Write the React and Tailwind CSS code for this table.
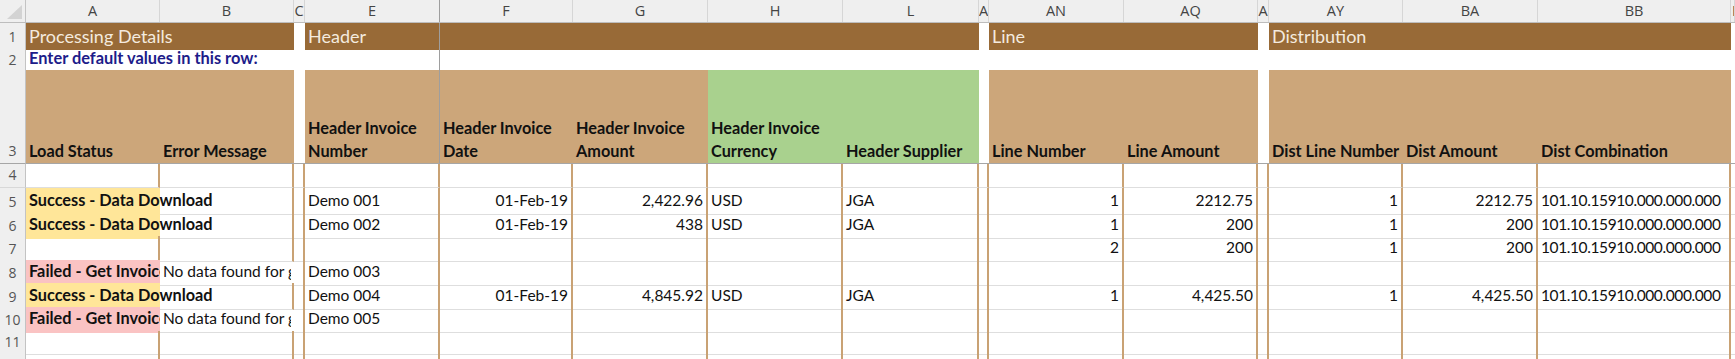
import React from "react";

// column template shared by every row of the sheet
const COLS =
  "grid grid-cols-[26px_134px_134px_11px_135px_133px_135px_135px_136px_10px_135px_134px_11px_134px_135px_193px_1fr]";

const LETTERS = ["A", "B", "C", "E", "F", "G", "H", "L", "A", "AN", "AQ", "A", "AY", "BA", "BB", "B"];

const DIST = "101.10.15910.000.000.000";

const rows = [
  { n: 4, h: "h-[24px]" },
  { n: 5, h: "h-[24px]", status: "ok", e: "Demo 001", f: "01-Feb-19", g: "2,422.96", cur: "USD", sup: "JGA", an: "1", aq: "2212.75", ay: "1", ba: "2212.75", bb: DIST },
  { n: 6, h: "h-[24px]", status: "ok", e: "Demo 002", f: "01-Feb-19", g: "438", cur: "USD", sup: "JGA", an: "1", aq: "200", ay: "1", ba: "200", bb: DIST },
  { n: 7, h: "h-[24px]", an: "2", aq: "200", ay: "1", ba: "200", bb: DIST },
  { n: 8, h: "h-[23px]", status: "fail", e: "Demo 003" },
  { n: 9, h: "h-[24px]", status: "ok", e: "Demo 004", f: "01-Feb-19", g: "4,845.92", cur: "USD", sup: "JGA", an: "1", aq: "4,425.50", ay: "1", ba: "4,425.50", bb: DIST },
  { n: 10, h: "h-[24px]", status: "fail", e: "Demo 005" },
  { n: 11, h: "h-[23px]" },
  { n: 12, h: "h-[24px]" },
];

const cell = "flex items-end pb-[2px] px-[3px] whitespace-nowrap border-b border-b-[#dedede]";
const tanR = "border-r-2 border-r-[#c9a274]";

function RowNum({ n, extra = "" }) {
  return (
    <div className={`flex items-end justify-center pb-[2px] bg-[#efefef] border-r border-r-[#c3c3c3] text-[14px] text-[#555] [font-family:'Open_Sans',sans-serif] ${extra}`}>
      {n}
    </div>
  );
}

function DataRow({ r }) {
  const ok = r.status === "ok";
  const fail = r.status === "fail";
  return (
    <div className={`${COLS} ${r.h}`}>
      <RowNum n={r.n} extra="border-b border-b-[#d8d8d8]" />
      {ok && (
        <div className={`${cell} bg-[#ffe699] border-b-[#ffe699] font-bold text-[16.3px]`}>
          <span className="relative z-10">Success - Data Download</span>
        </div>
      )}
      {fail && (
        <div className={`${cell} bg-[#fac3c3] border-b-[#fac3c3] font-bold text-[16.3px] overflow-hidden`}>
          Failed - Get Invoice Details
        </div>
      )}
      {!r.status && <div className={`${cell} ${tanR}`} />}
      {fail ? (
        <div className={cell}>
          <span className="relative z-10 w-[138px] overflow-hidden">No data found for given criteria</span>
        </div>
      ) : (
        <div className={`${cell} ${tanR}`} />
      )}
      <div className={`${cell} ${tanR}`} />
      <div className={`${cell} ${tanR}`}>{r.e}</div>
      <div className={`${cell} ${tanR} justify-end`}>{r.f}</div>
      <div className={`${cell} ${tanR} justify-end`}>{r.g}</div>
      <div className={`${cell} ${tanR}`}>{r.cur}</div>
      <div className={`${cell} ${tanR}`}>{r.sup}</div>
      <div className={`${cell} ${tanR}`} />
      <div className={`${cell} ${tanR} justify-end`}>{r.an}</div>
      <div className={`${cell} ${tanR} justify-end`}>{r.aq}</div>
      <div className={`${cell} ${tanR}`} />
      <div className={`${cell} ${tanR} justify-end`}>{r.ay}</div>
      <div className={`${cell} ${tanR} justify-end`}>{r.ba}</div>
      <div className={`${cell} ${tanR} tracking-[-0.4px]`}>{r.bb}</div>
      <div className={cell} />
    </div>
  );
}

function HeadText({ lines }) {
  return (
    <div className="flex flex-col justify-end h-full pb-[1px] px-[3px] leading-[23px] font-bold whitespace-nowrap">
      {lines.map((l) => (
        <span key={l}>{l}</span>
      ))}
    </div>
  );
}

export default function App() {
  const tan = "bg-[#cca67a] border-b border-b-[#a6a6a6]";
  const green = "bg-[#a9d18e] border-b border-b-[#a6a6a6]";
  const blank = "bg-white border-b border-b-[#a6a6a6]";
  const brown = "bg-[#986a37] text-[#f4eadf] text-[18px] flex items-center px-[3px] whitespace-nowrap";

  return (
    <div className="w-[1735px] h-[359px] overflow-hidden bg-white text-[15.5px] text-[#111] [font-family:Lato,sans-serif]">
      {/* column letters */}
      <div className={`${COLS} h-[23px] bg-[#efefef] border-b border-b-[#bdbdbd]`}>
        <div className="relative border-r border-r-[#c3c3c3]">
          <svg className="absolute right-[3px] bottom-[3px]" width="15" height="14" viewBox="0 0 15 14">
            <path d="M15 0 L15 14 L0 14 Z" fill="#d3d3d3" />
          </svg>
        </div>
        {LETTERS.map((l, i) => (
          <div
            key={i}
            className={`flex items-center overflow-hidden text-[14.5px] text-[#444] [font-family:'Open_Sans',sans-serif] border-r ${
              i === 3 ? "border-r-[#9e9e9e]" : "border-r-[#d6d6d6]"
            } ${i === 15 ? "justify-start pl-[1px]" : "justify-center"}`}
          >
            {l}
          </div>
        ))}
      </div>

      {/* row 1: section bands */}
      <div className={`${COLS} h-[23px]`}>
        <RowNum n={1} extra="border-b border-b-[#d8d8d8] items-center pb-0" />
        <div className={`${brown} col-span-2`}>Processing Details</div>
        <div />
        <div className={`${brown} border-r border-r-[#9e9e9e]`}>Header</div>
        <div className="bg-[#986a37] col-span-4" />
        <div />
        <div className={`${brown} col-span-2`}>Line</div>
        <div />
        <div className={`${brown} col-span-3`}>Distribution</div>
        <div />
      </div>

      {/* row 2: default values prompt */}
      <div className={`${COLS} h-[24px]`}>
        <RowNum n={2} extra="border-b border-b-[#d8d8d8]" />
        <div className="col-span-4 flex items-end pb-[2px] px-[3px] font-bold text-[16.4px] text-[#1d1c8a] whitespace-nowrap border-r border-r-[#9e9e9e]">
          Enter default values in this row:
        </div>
        <div className="col-span-12" />
      </div>

      {/* row 3: column titles */}
      <div className={`${COLS} h-[94px] text-[16.3px]`}>
        <RowNum n={3} extra="border-b border-b-[#a6a6a6]" />
        <div className={tan}><HeadText lines={["Load Status"]} /></div>
        <div className={tan}><HeadText lines={["Error Message"]} /></div>
        <div className={blank} />
        <div className={`${tan} border-r border-r-[#9e9e9e]`}><HeadText lines={["Header Invoice", "Number"]} /></div>
        <div className={tan}><HeadText lines={["Header Invoice", "Date"]} /></div>
        <div className={tan}><HeadText lines={["Header Invoice", "Amount"]} /></div>
        <div className={green}><HeadText lines={["Header Invoice", "Currency"]} /></div>
        <div className={green}><HeadText lines={["Header Supplier"]} /></div>
        <div className={blank} />
        <div className={tan}><HeadText lines={["Line Number"]} /></div>
        <div className={tan}><HeadText lines={["Line Amount"]} /></div>
        <div className={blank} />
        <div className={tan}><HeadText lines={["Dist Line Number"]} /></div>
        <div className={tan}><HeadText lines={["Dist Amount"]} /></div>
        <div className={tan}><HeadText lines={["Dist Combination"]} /></div>
        <div className={blank} />
      </div>

      {rows.map((r) => (
        <DataRow key={r.n} r={r} />
      ))}
    </div>
  );
}
